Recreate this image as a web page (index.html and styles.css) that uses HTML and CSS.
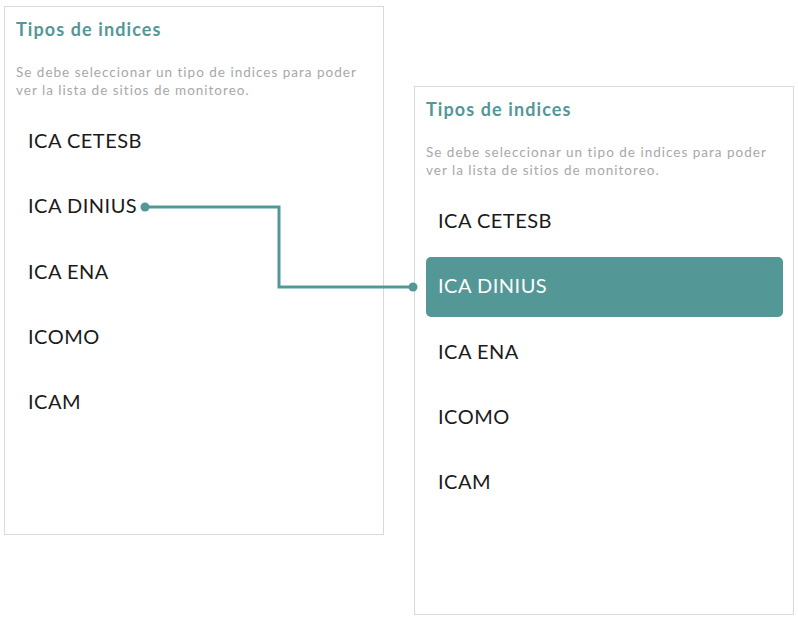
FILE: index.html
```html
<!DOCTYPE html>
<html lang="es">
<head>
<meta charset="utf-8">
<title>Tipos de indices</title>
<link rel="stylesheet" href="styles.css">
</head>
<body>
<div class="stage">
  <section class="panel">
    <h2 class="title">Tipos de indices</h2>
    <p class="desc">Se debe seleccionar un tipo de indices para poder ver la lista de sitios de monitoreo.</p>
    <ul class="list">
      <li class="item">ICA CETESB</li>
      <li class="item">ICA DINIUS</li>
      <li class="item">ICA ENA</li>
      <li class="item">ICOMO</li>
      <li class="item">ICAM</li>
    </ul>
  </section>
  <section class="panel panel-shift">
    <h2 class="title">Tipos de indices</h2>
    <p class="desc">Se debe seleccionar un tipo de indices para poder ver la lista de sitios de monitoreo.</p>
    <ul class="list">
      <li class="item">ICA CETESB</li>
      <li class="item item-active">ICA DINIUS</li>
      <li class="item">ICA ENA</li>
      <li class="item">ICOMO</li>
      <li class="item">ICAM</li>
    </ul>
  </section>
  <svg class="connector" width="798" height="619" viewBox="0 0 798 619">
    <path d="M145 207 H279 V287 H413" fill="none" stroke="#539797" stroke-width="3"/>
    <circle cx="145" cy="207" r="4.5" fill="#539797"/>
    <circle cx="413" cy="287" r="4.5" fill="#539797"/>
  </svg>
</div>
</body>
</html>
```

FILE: styles.css
```css
* {
  box-sizing: border-box;
}

html, body {
  margin: 0;
  padding: 0;
  background: #ffffff;
}

body {
  font-family: Lato, "Open Sans", sans-serif;
  width: 798px;
  height: 619px;
  overflow: hidden;
}

.stage {
  position: relative;
  display: flex;
  align-items: flex-start;
  gap: 30px;
  padding: 6px 0 0 4px;
  width: 798px;
  height: 619px;
}

.panel {
  width: 380px;
  height: 529px;
  border: 1px solid #d9d9d9;
  background: #ffffff;
  padding: 10px 10px 0 11px;
  display: flex;
  flex-direction: column;
}

.panel-shift {
  margin-top: 80px;
}

.title {
  margin: 0;
  font-size: 18px;
  line-height: 24px;
  font-weight: 700;
  color: #539797;
  letter-spacing: 1.1px;
}

.desc {
  margin: 22px 0 0 0;
  font-size: 13.5px;
  line-height: 18px;
  color: #a8a8a8;
  letter-spacing: 1px;
  padding-right: 12px;
}

.list {
  list-style: none;
  margin: 13px 0 0 0;
  padding: 0;
  display: flex;
  flex-direction: column;
  gap: 5.25px;
}

.item {
  height: 60px;
  display: flex;
  align-items: center;
  padding: 0 0 4px 12px;
  font-size: 20px;
  color: #1a1a1a;
  letter-spacing: 0.5px;
  border-radius: 5px;
}

.item-active {
  background: #539797;
  color: #ffffff;
}

.connector {
  position: absolute;
  left: 0;
  top: 0;
  pointer-events: none;
}
```
